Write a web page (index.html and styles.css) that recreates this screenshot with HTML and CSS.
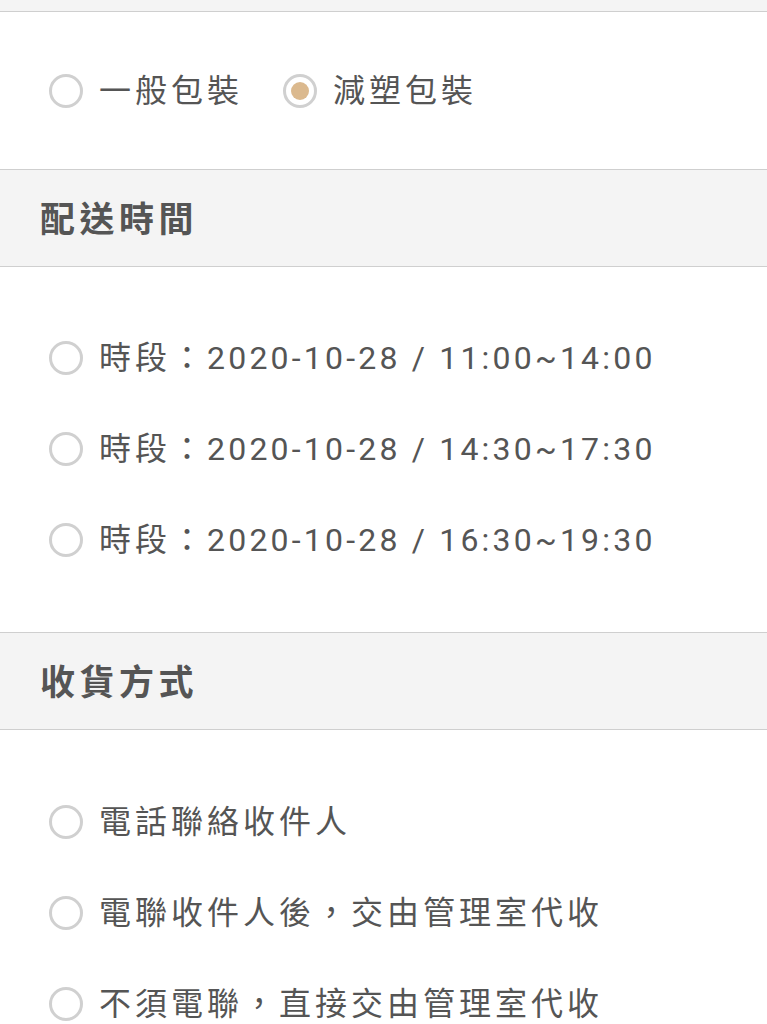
FILE: index.html
```html
<!DOCTYPE html>
<html lang="zh-Hant">
<head>
  <meta charset="UTF-8">
  <title>配送設定</title>
  <link rel="stylesheet" href="styles.css">
</head>
<body>
  <div class="top-strip"></div>

  <div class="section pack-section">
    <div class="radio-inline">
      <label class="radio-item">
        <span class="radio"></span>
        <span class="label">一般包裝</span>
      </label>
      <label class="radio-item">
        <span class="radio checked"></span>
        <span class="label">減塑包裝</span>
      </label>
    </div>
  </div>

  <h2 class="section-title">配送時間</h2>

  <div class="section list-section time-list">
    <label class="radio-item row">
      <span class="radio"></span>
      <span class="label">時段：<span class="date">2020-10-28 / 11:00~14:00</span></span>
    </label>
    <label class="radio-item row">
      <span class="radio"></span>
      <span class="label">時段：<span class="date">2020-10-28 / 14:30~17:30</span></span>
    </label>
    <label class="radio-item row">
      <span class="radio"></span>
      <span class="label">時段：<span class="date">2020-10-28 / 16:30~19:30</span></span>
    </label>
  </div>

  <h2 class="section-title">收貨方式</h2>

  <div class="section list-section receive-list">
    <label class="radio-item row">
      <span class="radio"></span>
      <span class="label">電話聯絡收件人</span>
    </label>
    <label class="radio-item row">
      <span class="radio"></span>
      <span class="label">電聯收件人後，交由管理室代收</span>
    </label>
    <label class="radio-item row">
      <span class="radio"></span>
      <span class="label">不須電聯，直接交由管理室代收</span>
    </label>
  </div>
</body>
</html>
```

FILE: styles.css
```css
body {
  margin: 0;
  padding: 0;
  background: #fff;
  color: #555;
  font-family: Roboto, "Noto Sans CJK TC", sans-serif;
}

.top-strip {
  height: 11px;
  background: #f4f4f4;
  border-bottom: 1px solid #cfcfcf;
}

.section {
  background: #fff;
}

.pack-section {
  height: 157px;
  display: flex;
  align-items: center;
  padding: 0 49px;
}

.radio-inline {
  display: flex;
  gap: 40px;
}

.list-section {
  padding: 0 49px;
}

.time-list {
  padding-top: 45px;
  padding-bottom: 47px;
}

.receive-list {
  padding-top: 46px;
}

.radio-item {
  display: flex;
  align-items: center;
  gap: 16px;
}

.radio-item.row {
  height: 91px;
}

.radio {
  box-sizing: border-box;
  width: 34px;
  height: 34px;
  border: 3px solid #d0d0d0;
  border-radius: 50%;
  flex-shrink: 0;
  position: relative;
}

.radio.checked::after {
  content: "";
  position: absolute;
  top: 5px;
  left: 5px;
  width: 18px;
  height: 18px;
  border-radius: 50%;
  background: #dbb98e;
}

.label {
  font-size: 32px;
  letter-spacing: 4px;
  line-height: 1;
  color: #555;
}

.date {
  letter-spacing: 3.2px;
}

.section-title {
  margin: 0;
  box-sizing: border-box;
  height: 98px;
  display: flex;
  align-items: center;
  padding: 0 40px 4px;
  background: #f4f4f4;
  border-top: 1px solid #cfcfcf;
  border-bottom: 1px solid #cfcfcf;
  font-size: 35px;
  font-weight: bold;
  letter-spacing: 4.5px;
  color: #555;
}
```
